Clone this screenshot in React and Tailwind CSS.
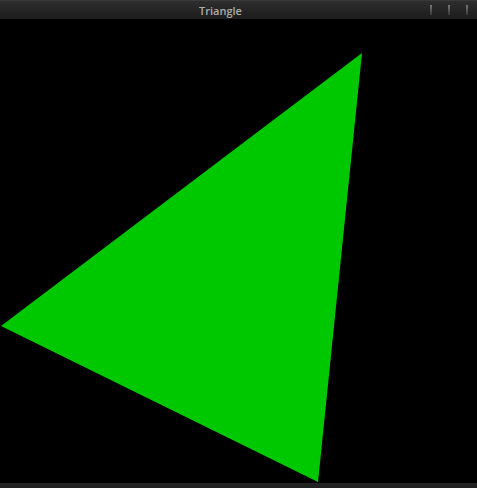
export default function App() {
  return (
    <div className="w-[477px] h-[488px] flex flex-col bg-black overflow-hidden">
      <div className="h-[19px] shrink-0 relative flex items-center justify-center pr-[36px] bg-gradient-to-b from-[#2e2e2e] to-[#1c1c1c] border-t border-[#3a3a3a]">
        <span className="text-[11px] leading-none text-[#adadad] font-semibold" style={{ fontFamily: '"Open Sans", sans-serif' }}>Triangle</span>
        <div className="absolute right-[9px] top-[4px] flex gap-[16px]">
          <div className="w-[2px] h-[10px] bg-gradient-to-b from-[#777] to-[#3a3a3a]" />
          <div className="w-[2px] h-[10px] bg-gradient-to-b from-[#777] to-[#3a3a3a]" />
          <div className="w-[2px] h-[10px] bg-gradient-to-b from-[#777] to-[#3a3a3a]" />
        </div>
      </div>
      <div className="flex-1 bg-black">
        <svg width="477" height="464" viewBox="0 0 477 464" className="block">
          <polygon points="362,34 1,307 318,463" fill="#00c800" />
        </svg>
      </div>
      <div className="h-[5px] shrink-0 bg-[#222]" />
    </div>
  );
}
